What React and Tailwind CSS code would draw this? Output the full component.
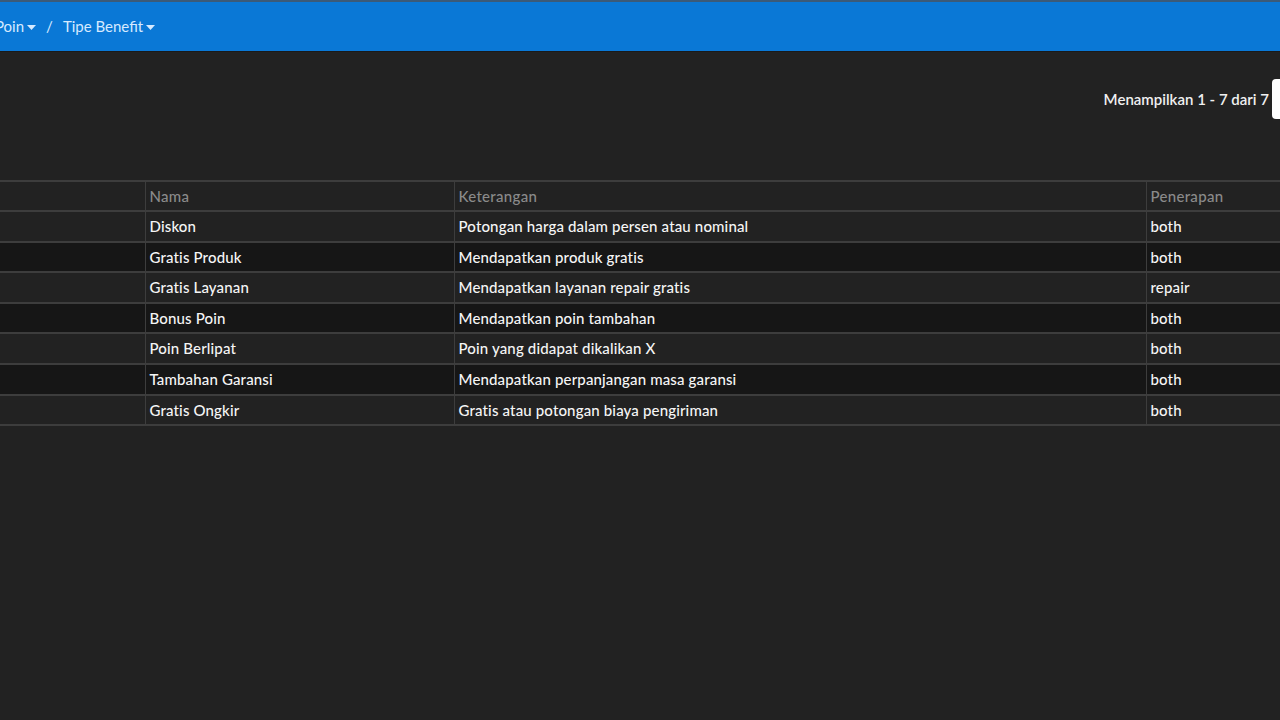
import React from 'react';

const rows = [
  { nama: 'Diskon', ket: 'Potongan harga dalam persen atau nominal', pen: 'both' },
  { nama: 'Gratis Produk', ket: 'Mendapatkan produk gratis', pen: 'both' },
  { nama: 'Gratis Layanan', ket: 'Mendapatkan layanan repair gratis', pen: 'repair' },
  { nama: 'Bonus Poin', ket: 'Mendapatkan poin tambahan', pen: 'both' },
  { nama: 'Poin Berlipat', ket: 'Poin yang didapat dikalikan X', pen: 'both' },
  { nama: 'Tambahan Garansi', ket: 'Mendapatkan perpanjangan masa garansi', pen: 'both' },
  { nama: 'Gratis Ongkir', ket: 'Gratis atau potongan biaya pengiriman', pen: 'both' },
];

function Caret() {
  return (
    <svg width="9" height="5" viewBox="0 0 9 5" className="ml-[3px] mt-[2px]">
      <path d="M0 0h9L4.5 5z" fill="currentColor" />
    </svg>
  );
}

export default function App() {
  return (
    <div className="w-[1280px] h-[720px] overflow-hidden bg-[#222222] font-['Lato','Liberation_Sans',sans-serif]">
      {/* Navbar */}
      <div className="h-[52px] bg-[#0a78d6] border-t-2 border-[#3b5a78] border-b border-b-[#1a1a1a] flex items-center">
        <div className="flex items-center -ml-[5px] text-[15px] text-[#d6eaff] pb-[1px]">
          <span>Poin</span>
          <Caret />
          <span className="mx-[10px]">/</span>
          <span>Tipe Benefit</span>
          <Caret />
        </div>
      </div>

      {/* Toolbar */}
      <div className="flex justify-end items-center h-[93px] pt-[1px]">
        <span className="text-[15px] font-semibold text-[#f0f0f0] mr-[3px]">Menampilkan 1 - 7 dari 7</span>
        <div className="w-[8px] h-[40px] bg-white rounded-l-[4px]" />
      </div>

      {/* Table */}
      <div className="mt-[35px] overflow-hidden">
        <table className="w-[1330px] border-collapse text-[15px] table-fixed">
          <colgroup>
            <col className="w-[145px]" />
            <col className="w-[309px]" />
            <col className="w-[692px]" />
            <col className="w-[184px]" />
          </colgroup>
          <thead>
            <tr className="h-[30px] border-y-2 border-[#3d3d3d]">
              <th className="border-r border-[#3d3d3d]" />
              <th className="text-left font-medium tracking-[0.3px] text-[#8a8a8a] px-[4px] border-r border-[#3d3d3d]">Nama</th>
              <th className="text-left font-medium tracking-[0.3px] text-[#8a8a8a] px-[4px] border-r border-[#3d3d3d]">Keterangan</th>
              <th className="text-left font-medium tracking-[0.3px] text-[#8a8a8a] px-[4px]">Penerapan</th>
            </tr>
          </thead>
          <tbody>
            {rows.map((r, i) => (
              <tr key={r.nama} className={`h-[30.6px] border-b-2 border-[#3d3d3d] ${i % 2 === 1 ? 'bg-[#161616]' : 'bg-[#222222]'}`}>
                <td className="border-r border-[#3d3d3d]" />
                <td className="px-[4px] font-medium tracking-[0.15px] text-[#f5f5f5] border-r border-[#3d3d3d]">{r.nama}</td>
                <td className="px-[4px] font-medium tracking-[0.15px] text-[#f5f5f5] border-r border-[#3d3d3d]">{r.ket}</td>
                <td className="px-[4px] font-medium tracking-[0.15px] text-[#f5f5f5]">{r.pen}</td>
              </tr>
            ))}
          </tbody>
        </table>
      </div>
    </div>
  );
}
